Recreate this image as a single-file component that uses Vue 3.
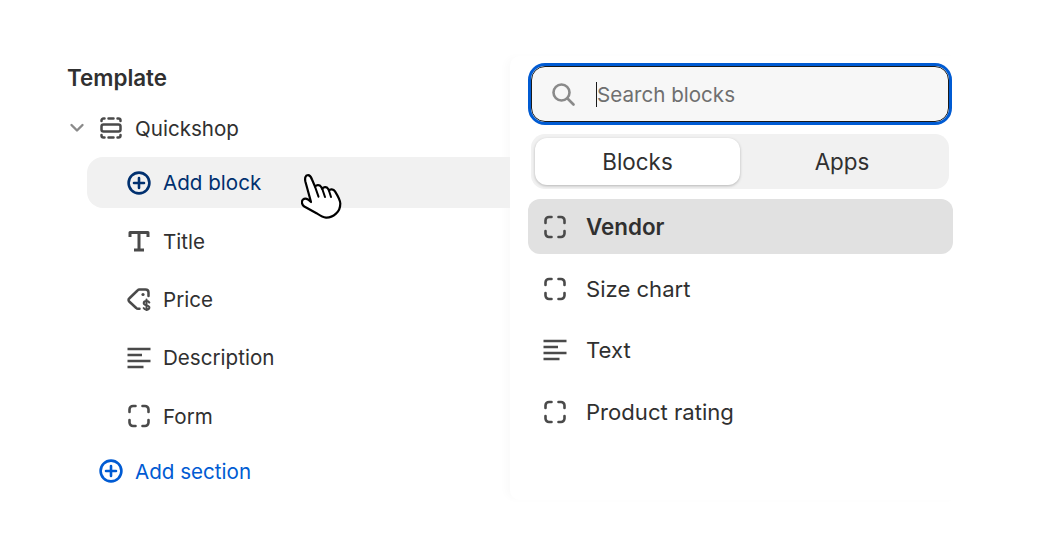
<script setup>
const sidebarItems = [
  { label: 'Title', icon: 'title' },
  { label: 'Price', icon: 'price' },
  { label: 'Description', icon: 'lines' },
  { label: 'Form', icon: 'block' }
]

const results = [
  { label: 'Size chart', icon: 'block' },
  { label: 'Text', icon: 'lines' },
  { label: 'Product rating', icon: 'block' }
]
</script>

<template>
  <div class="page">
    <section class="tree">
      <h2 class="tree-title">Template</h2>

      <div class="section-row">
        <svg class="chevron" viewBox="0 0 16 16" width="16" height="16">
          <path d="M2.500 5 8 10.500 13.500 5" fill="none" stroke="#8a8a8a" stroke-width="2.400" stroke-linecap="round" stroke-linejoin="round" />
        </svg>
        <svg class="icon" viewBox="0 0 24 24" width="24" height="24">
          <g fill="none" stroke="#4a4a4a" stroke-width="2.500" stroke-linecap="round" stroke-linejoin="round">
            <rect x="2.500" y="8.500" width="19" height="7" rx="2" />
            <path d="M2.500 5V4.500a2 2 0 0 1 2-2H5.500M9.500 2.500h5M18.500 2.500h1a2 2 0 0 1 2 2V5M2.500 19v.500a2 2 0 0 0 2 2H5.500M9.500 21.500h5M18.500 21.500h1a2 2 0 0 0 2-2V19" />
          </g>
        </svg>
        <span>Quickshop</span>
      </div>

      <div class="add-block">
        <svg class="icon" viewBox="0 0 24 24" width="24" height="24">
          <g fill="none" stroke="#00306f" stroke-width="2.600" stroke-linecap="round">
            <circle cx="12" cy="12" r="10.400" />
            <path d="M12 7v10M7 12h10" />
          </g>
        </svg>
        <span>Add block</span>
        <svg class="cursor" viewBox="0 0 44 50" width="44" height="50">
          <path d="M10 31 4.500 11C3.500 7 4.500 4.300 6.800 4.200 8.800 4 10 5.800 11 8.500l3 7.200c.8-1.800 4.500-2.500 6 0l1.300 2.300c.8-2.200 4.300-2.800 5.700-.3l1 1.800c1-1.500 4.500-1.600 6 .8 2.800 4.500 5.300 9 5.300 12.200 0 5-1.800 8-4.300 10.200-3 2.600-7 4.200-10 4-3.300-.3-6.500-2.500-9.500-4.500L3.300 35.500C.3 33.500.5 30 2 28.500c1.500-1.300 3.500-1 5 0z" fill="#fff" stroke="#000" stroke-width="2.200" stroke-linejoin="round" />
          <path d="M14 15.700l3.500 10M21.300 18l2.700 8M28 19.800l2 6.200" fill="none" stroke="#000" stroke-width="2" stroke-linecap="round" />
        </svg>
      </div>

      <div v-for="item in sidebarItems" :key="item.label" class="tree-item">
        <svg v-if="item.icon === 'title'" class="icon" viewBox="0 0 24 24" width="24" height="24">
          <path d="M3 8V3.500h18V8M12 3.500v18M7 21h10" fill="none" stroke="#4a4a4a" stroke-width="3" stroke-linejoin="round" />
        </svg>
        <svg v-else-if="item.icon === 'price'" class="icon" viewBox="0 0 24 24" width="24" height="24">
          <g fill="none" stroke="#4a4a4a" stroke-linecap="round" stroke-linejoin="round">
            <path d="M12.500 21.800H11a2.500 2.500 0 0 1-1.800-.8L2.200 14.500a2 2 0 0 1 0-3L10.500 3.500A3 3 0 0 1 12.500 2.600h6A3 3 0 0 1 21.500 5.500V9" stroke-width="2.500" />
            <path d="M22.300 15.500c-.4-.9-1.300-1.400-2.800-1.400-1.700 0-2.800.8-2.800 2.100 0 2.800 5.700 1.500 5.700 4.300 0 1.300-1.100 2.100-2.900 2.100-1.400 0-2.400-.6-2.800-1.500M19.500 12.500v12.500" stroke-width="2" />
          </g>
          <circle cx="16" cy="7.500" r="1.600" fill="#4a4a4a" />
        </svg>
        <svg v-else-if="item.icon === 'lines'" class="icon" viewBox="0 0 24 24" width="24" height="24">
          <path d="M0.500 3h23M0.500 9h14.500M0.500 15h23M0.500 21h16" fill="none" stroke="#4a4a4a" stroke-width="2.400" />
        </svg>
        <svg v-else class="icon" viewBox="0 0 24 24" width="24" height="24">
          <path d="M2.500 8V5.500a3.500 3.500 0 0 1 3.500-3.500H8.500M15.500 2H18a3.500 3.500 0 0 1 3.500 3.500V8M2.500 16v2.500A3.500 3.500 0 0 0 6 22H8.500M15.500 22H18a3.500 3.500 0 0 0 3.500-3.500V16" fill="none" stroke="#4a4a4a" stroke-width="2.600" stroke-linecap="round" />
        </svg>
        <span>{{ item.label }}</span>
      </div>

      <div class="add-section">
        <svg class="icon" viewBox="0 0 24 24" width="24" height="24">
          <g fill="none" stroke="#005bd3" stroke-width="2.600" stroke-linecap="round">
            <circle cx="12" cy="12" r="10.400" />
            <path d="M12 7v10M7 12h10" />
          </g>
        </svg>
        <span>Add section</span>
      </div>
    </section>

    <section class="picker">
      <div class="search">
        <svg viewBox="0 0 24 24" width="24" height="24">
          <g fill="none" stroke="#8a8a8a" stroke-width="2.600" stroke-linecap="round">
            <circle cx="10.500" cy="10.500" r="8" />
            <path d="m16.500 16.500 6 6" />
          </g>
        </svg>
        <span class="caret"></span>
        <span class="placeholder">Search blocks</span>
      </div>

      <div class="tabs">
        <div class="tab tab-active">Blocks</div>
        <div class="tab">Apps</div>
      </div>

      <div class="result result-active">
        <svg class="icon" viewBox="0 0 24 24" width="24" height="24">
          <path d="M2.500 8V5.500a3.500 3.500 0 0 1 3.500-3.500H8.500M15.500 2H18a3.500 3.500 0 0 1 3.500 3.500V8M2.500 16v2.500A3.500 3.500 0 0 0 6 22H8.500M15.500 22H18a3.500 3.500 0 0 0 3.500-3.500V16" fill="none" stroke="#4a4a4a" stroke-width="2.600" stroke-linecap="round" />
        </svg>
        <span>Vendor</span>
      </div>

      <div v-for="item in results" :key="item.label" class="result">
        <svg v-if="item.icon === 'lines'" class="icon" viewBox="0 0 24 24" width="24" height="24">
          <path d="M0.500 3h23M0.500 9h14.500M0.500 15h23M0.500 21h16" fill="none" stroke="#4a4a4a" stroke-width="2.400" />
        </svg>
        <svg v-else class="icon" viewBox="0 0 24 24" width="24" height="24">
          <path d="M2.500 8V5.500a3.500 3.500 0 0 1 3.500-3.500H8.500M15.500 2H18a3.500 3.500 0 0 1 3.500 3.500V8M2.500 16v2.500A3.500 3.500 0 0 0 6 22H8.500M15.500 22H18a3.500 3.500 0 0 0 3.500-3.500V16" fill="none" stroke="#4a4a4a" stroke-width="2.600" stroke-linecap="round" />
        </svg>
        <span>{{ item.label }}</span>
      </div>
    </section>
  </div>
</template>

<style scoped>
.page {
  display: flex;
  align-items: flex-start;
  width: 1038px;
  height: 546px;
  padding-left: 67px;
  box-sizing: border-box;
  overflow: hidden;
  background: #fff;
  color: #303030;
  font-family: Inter, "Liberation Sans", sans-serif;
  font-size: 22.100px;
}

.tree {
  width: 443px;
  flex: none;
  padding-top: 64px;
  font-size: 20.600px;
}

.tree-title {
  margin: 0 0 18px;
  height: 28px;
  line-height: 28px;
  font-size: 22.400px;
  font-weight: 600;
}

.icon {
  flex: none;
}

.section-row {
  display: flex;
  align-items: center;
  height: 36px;
}

.chevron {
  margin-right: 14px;
  margin-left: 2px;
}

.section-row span {
  margin-left: 12px;
}

.add-block {
  position: relative;
  display: flex;
  align-items: center;
  gap: 12px;
  height: 51px;
  margin: 11px 0 4px 20px;
  padding-left: 40px;
  border-radius: 16px 0 0 16px;
  background: #f1f1f1;
  color: #00306f;
}

.cursor {
  position: absolute;
  left: 214px;
  top: 14px;
}

.tree-item {
  display: flex;
  align-items: center;
  gap: 12px;
  height: 58.300px;
  padding-left: 60px;
}

.add-section {
  display: flex;
  align-items: center;
  gap: 12px;
  height: 52px;
  padding-left: 32px;
  color: #005bd3;
}

.picker {
  width: 450px;
  height: 444px;
  margin-top: 56px;
  padding: 10px 11px 0 18px;
  flex: none;
  box-sizing: border-box;
  border-radius: 10px 0 0 10px;
  box-shadow: -6px 0 8px -2px rgba(0, 0, 0, 0.025);
}

.search {
  display: flex;
  align-items: center;
  width: 418px;
  height: 56px;
  margin-left: 3px;
  padding-left: 19px;
  box-sizing: border-box;
  border: 1px solid #1a1a1a;
  border-radius: 14px;
  background: #f7f7f7;
  outline: 3px solid #005bd3;
  outline-offset: 0;
  color: #6f6f6f;
  font-size: 20.600px;
}

.caret {
  width: 1px;
  height: 25px;
  margin-left: 21px;
  background: #1a1a1a;
}

.tabs {
  display: flex;
  width: 418px;
  height: 55px;
  margin: 12px 0 10px 3px;
  padding: 4px;
  box-sizing: border-box;
  border-radius: 14px;
  background: #f1f1f1;
  font-size: 22.400px;
}

.tab {
  flex: 1;
  display: flex;
  align-items: center;
  justify-content: center;
}

.tab-active {
  flex: none;
  width: 205px;
  margin-right: -1px;
  border-radius: 12px;
  background: #fff;
  box-shadow: 0 1px 3px rgba(0, 0, 0, 0.25);
}

.result {
  display: flex;
  align-items: center;
  gap: 19px;
  height: 61.500px;
  padding-left: 15px;
}

.result-active {
  width: 425px;
  height: 55px;
  margin-bottom: 4px;
  box-sizing: border-box;
  border-radius: 12px;
  background: #e1e1e1;
  font-size: 22.400px;
  font-weight: 600;
}
</style>
